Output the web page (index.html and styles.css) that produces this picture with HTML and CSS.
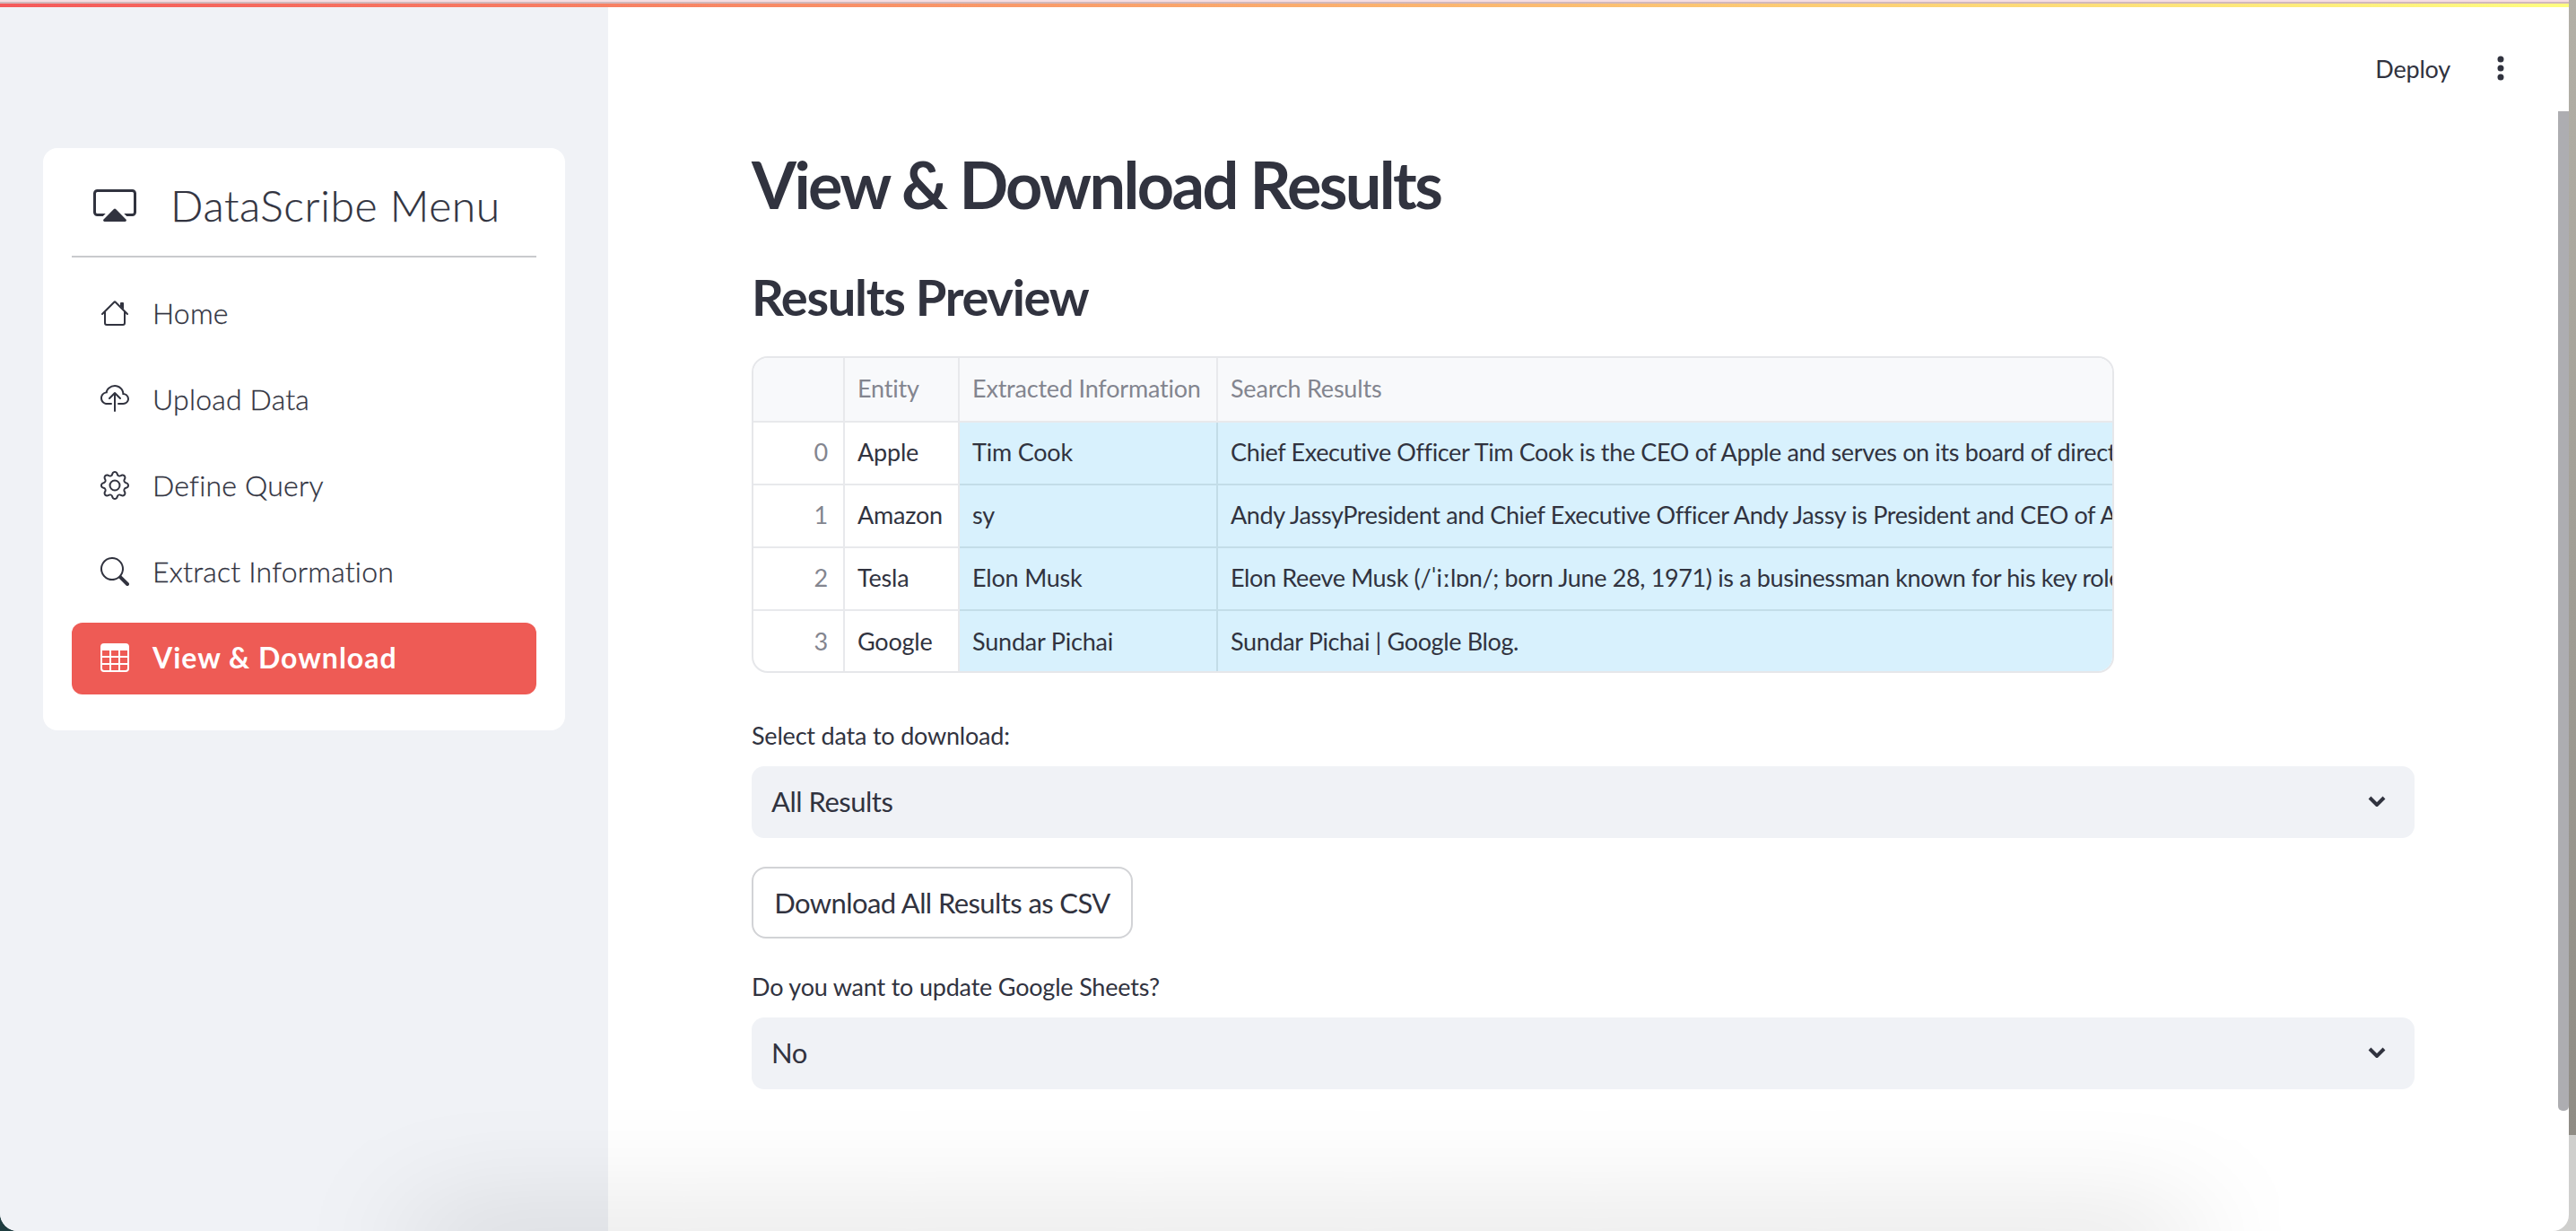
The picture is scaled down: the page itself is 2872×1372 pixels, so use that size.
FILE: index.html
```html
<!doctype html>
<html lang="en">
<head>
	<meta charset="utf-8">
	<title>View &amp; Download Results</title>
	<link rel="stylesheet" href="styles.css">
</head>
<body>

	<div class="window">
		<div class="stripe"></div>

		<div class="app">
			<aside class="sidebar">
				<nav class="menu-card">
					<div class="menu-title">
						<svg class="title-icon" viewBox="0 2 16 12" fill="currentColor"><path d="m7.646 9.354-3.792 3.792a.5.5 0 0 0 .353.854h7.586a.5.5 0 0 0 .354-.854L8.354 9.354a.5.5 0 0 0-.708 0z"/><path d="M11.414 11H14.5a.5.5 0 0 0 .5-.5v-7a.5.5 0 0 0-.5-.5h-13a.5.5 0 0 0-.5.5v7a.5.5 0 0 0 .5.5h3.086l-1 1H1.5A1.5 1.5 0 0 1 0 10.5v-7A1.5 1.5 0 0 1 1.5 2h13A1.5 1.5 0 0 1 16 3.5v7a1.5 1.5 0 0 1-1.5 1.5h-2.086l-1-1z"/></svg>
						<span>DataScribe Menu</span>
					</div>
					<hr class="menu-rule">
					<ul class="menu-list">
						<li class="menu-item">
							<svg class="item-icon" viewBox="0 0 16 16" fill="currentColor"><path d="M2 13.5V7h1v6.5a.5.5 0 0 0 .5.5h9a.5.5 0 0 0 .5-.5V7h1v6.5a1.5 1.5 0 0 1-1.5 1.5h-9A1.5 1.5 0 0 1 2 13.5zm11-11V6l-2-2V2.5a.5.5 0 0 1 .5-.5h1a.5.5 0 0 1 .5.5z"/><path d="M7.293 1.5a1 1 0 0 1 1.414 0l6.647 6.646a.5.5 0 0 1-.708.708L8 2.207 1.354 8.854a.5.5 0 1 1-.708-.708L7.293 1.5z"/></svg>
							Home
						</li>
						<li class="menu-item">
							<svg class="item-icon" viewBox="0 0 16 16" fill="currentColor"><path d="M4.406 1.342A5.53 5.53 0 0 1 8 0c2.69 0 4.923 2 5.166 4.579C14.758 4.804 16 6.137 16 7.773 16 9.569 14.502 11 12.687 11H10a.5.5 0 0 1 0-1h2.688C13.979 10 15 8.988 15 7.773c0-1.216-1.02-2.228-2.313-2.228h-.5v-.5C12.188 2.825 10.328 1 8 1a4.53 4.53 0 0 0-2.941 1.1c-.757.652-1.153 1.438-1.153 2.055v.448l-.445.049C2.064 4.805 1 5.952 1 7.318 1 8.785 2.23 10 3.781 10H6a.5.5 0 0 1 0 1H3.781C1.708 11 0 9.366 0 7.318c0-1.763 1.266-3.223 2.942-3.593.143-.863.698-1.723 1.464-2.383z"/><path d="M7.646 4.146a.5.5 0 0 1 .708 0l3 3a.5.5 0 0 1-.708.708L8.5 5.707V14.5a.5.5 0 0 1-1 0V5.707L5.354 7.854a.5.5 0 1 1-.708-.708l3-3z"/></svg>
							Upload Data
						</li>
						<li class="menu-item">
							<svg class="item-icon" viewBox="0 0 16 16" fill="currentColor"><path d="M8 4.754a3.246 3.246 0 1 0 0 6.492 3.246 3.246 0 0 0 0-6.492zM5.754 8a2.246 2.246 0 1 1 4.492 0 2.246 2.246 0 0 1-4.492 0z"/><path d="M9.796 1.343c-.527-1.79-3.065-1.79-3.592 0l-.094.319a.873.873 0 0 1-1.255.52l-.292-.16c-1.64-.892-3.433.902-2.54 2.541l.159.292a.873.873 0 0 1-.52 1.255l-.319.094c-1.79.527-1.79 3.065 0 3.592l.319.094a.873.873 0 0 1 .52 1.255l-.16.292c-.892 1.64.901 3.434 2.541 2.54l.292-.159a.873.873 0 0 1 1.255.52l.094.319c.527 1.79 3.065 1.79 3.592 0l.094-.319a.873.873 0 0 1 1.255-.52l.292.16c1.64.893 3.434-.902 2.54-2.541l-.159-.292a.873.873 0 0 1 .52-1.255l.319-.094c1.79-.527 1.79-3.065 0-3.592l-.319-.094a.873.873 0 0 1-.52-1.255l.16-.292c.893-1.64-.902-3.433-2.541-2.54l-.292.159a.873.873 0 0 1-1.255-.52l-.094-.319zm-2.633.283c.246-.835 1.428-.835 1.674 0l.094.319a1.873 1.873 0 0 0 2.693 1.115l.291-.16c.764-.415 1.6.42 1.184 1.185l-.159.292a1.873 1.873 0 0 0 1.116 2.692l.318.094c.835.246.835 1.428 0 1.674l-.319.094a1.873 1.873 0 0 0-1.115 2.693l.16.291c.415.764-.42 1.6-1.185 1.184l-.291-.159a1.873 1.873 0 0 0-2.693 1.116l-.094.318c-.246.835-1.428.835-1.674 0l-.094-.319a1.873 1.873 0 0 0-2.692-1.115l-.292.16c-.764.415-1.6-.42-1.184-1.185l.159-.291A1.873 1.873 0 0 0 1.945 8.93l-.319-.094c-.835-.246-.835-1.428 0-1.674l.319-.094A1.873 1.873 0 0 0 3.06 4.377l-.16-.292c-.415-.764.42-1.6 1.185-1.184l.292.159a1.873 1.873 0 0 0 2.692-1.115l.094-.319z"/></svg>
							Define Query
						</li>
						<li class="menu-item">
							<svg class="item-icon" viewBox="0 0 16 16" fill="currentColor"><path d="M11.742 10.344a6.5 6.5 0 1 0-1.397 1.398h-.001c.03.04.062.078.098.115l3.85 3.85a1 1 0 0 0 1.415-1.414l-3.85-3.85a1.007 1.007 0 0 0-.115-.1zM12 6.5a5.5 5.5 0 1 1-11 0 5.5 5.5 0 0 1 11 0z"/></svg>
							Extract Information
						</li>
						<li class="menu-item active">
							<svg class="item-icon" viewBox="0 0 16 16" fill="currentColor"><path d="M0 2a2 2 0 0 1 2-2h12a2 2 0 0 1 2 2v12a2 2 0 0 1-2 2H2a2 2 0 0 1-2-2V2zm15 2h-4v3h4V4zm0 4h-4v3h4V8zm0 4h-4v3h3a1 1 0 0 0 1-1v-2zm-5 3v-3H6v3h4zm-5 0v-3H1v2a1 1 0 0 0 1 1h3zm-4-4h4V8H1v3zm0-4h4V4H1v3zm5-3v3h4V4H6zm4 4H6v3h4V8z"/></svg>
							View &amp; Download
						</li>
					</ul>
				</nav>
			</aside>

			<main class="main">
				<header class="toolbar">
					<span class="deploy">Deploy</span>
					<svg class="kebab" viewBox="0 0 8 28" fill="currentColor"><circle cx="4" cy="4" r="3.5"/><circle cx="4" cy="14" r="3.5"/><circle cx="4" cy="24" r="3.5"/></svg>
				</header>

				<section class="content">
					<h1>View &amp; Download Results</h1>
					<h3>Results Preview</h3>

					<div class="table-wrap">
						<table class="results">
							<colgroup>
								<col class="col-index">
								<col class="col-entity">
								<col class="col-info">
								<col class="col-search">
							</colgroup>
							<thead>
								<tr><th></th><th>Entity</th><th>Extracted Information</th><th>Search Results</th></tr>
							</thead>
							<tbody>
								<tr>
									<th>0</th><td>Apple</td>
									<td class="hit">Tim Cook</td>
									<td class="hit long">Chief Executive Officer Tim Cook is the CEO of Apple and serves on its board of directors.</td>
								</tr>
								<tr>
									<th>1</th><td>Amazon</td>
									<td class="hit">sy</td>
									<td class="hit long">Andy JassyPresident and Chief Executive Officer Andy Jassy is President and CEO of Amazon.</td>
								</tr>
								<tr>
									<th>2</th><td>Tesla</td>
									<td class="hit">Elon Musk</td>
									<td class="hit long">Elon Reeve Musk (/ˈiːlɒn/; born June 28, 1971) is a businessman known for his key roles.</td>
								</tr>
								<tr>
									<th>3</th><td>Google</td>
									<td class="hit">Sundar Pichai</td>
									<td class="hit long">Sundar Pichai | Google Blog.</td>
								</tr>
							</tbody>
						</table>
					</div>

					<label class="field-label first">Select data to download:</label>
					<div class="select">
						<span>All Results</span>
						<svg class="chevron" viewBox="0 0 20 12"><path d="M2 2l8 8 8-8"/></svg>
					</div>

					<button class="download">Download All Results as CSV</button>

					<label class="field-label">Do you want to update Google Sheets?</label>
					<div class="select">
						<span>No</span>
						<svg class="chevron" viewBox="0 0 20 12"><path d="M2 2l8 8 8-8"/></svg>
					</div>
				</section>

				<div class="scroll-thumb"></div>
			</main>
		</div>

		<div class="dock-shadow"></div>
	</div>

	<div class="desktop"></div>

</body>
</html>
```

FILE: styles.css
```css
html, body {
	margin: 0;
	padding: 0;
	height: 100%;
}
body {
	display: flex;
	overflow: hidden;
	background: linear-gradient(90deg, #1f3d40 50%, #cfcfcd 50%);
	font-family: "Lato", sans-serif;
	color: #31333f;
}
.window {
	position: relative;
	flex: 1;
	display: flex;
	flex-direction: column;
	overflow: hidden;
	background: #fff;
	border-radius: 0 0 18px 20px;
}
.desktop {
	width: 8px;
	background: linear-gradient(#b3b0a7, #8f8c85 92.2%, #cfcfcd 92.2%);
}

/* top decoration */
.stripe {
	height: 8px;
	flex: none;
	background:
		linear-gradient(#f6dee2 0 2px, #d2b8bc 2px 4px, transparent 4px),
		linear-gradient(90deg, #f5595a, #fffd80);
}

.app {
	flex: 1;
	display: flex;
	min-height: 0;
}

/* sidebar */
.sidebar {
	width: 678px;
	flex: none;
	box-sizing: border-box;
	padding: 157px 48px 0;
	background: #f0f2f6;
}
.menu-card {
	box-sizing: border-box;
	height: 649px;
	padding: 29px 32px 0;
	background: #fff;
	border-radius: 16px;
}
.menu-title {
	box-sizing: border-box;
	display: flex;
	align-items: center;
	gap: 38px;
	height: 72px;
	padding: 0 0 3px 24px;
	font-size: 48px;
	font-weight: 300;
	letter-spacing: 0.6px;
	-webkit-text-stroke: 0.25px #31333f;
}
.title-icon {
	width: 48px;
	height: 36px;
	flex: none;
}
.menu-rule {
	height: 2px;
	margin: 19px 0 0;
	border: 0;
	background: #c9cacd;
}
.menu-list {
	list-style: none;
	margin: 23px 0 0;
	padding: 0;
	display: flex;
	flex-direction: column;
	gap: 16px;
}
.menu-item {
	box-sizing: border-box;
	display: flex;
	align-items: center;
	gap: 26px;
	height: 80px;
	padding: 0 0 3px 32px;
	border-radius: 12px;
	font-size: 32px;
	font-weight: 300;
	letter-spacing: 0.2px;
	-webkit-text-stroke: 0.3px #31333f;
}
.item-icon {
	width: 32px;
	height: 32px;
	flex: none;
}
.menu-item.active {
	background: #ee5b55;
	color: #fff;
	font-weight: 700;
	letter-spacing: 1px;
	-webkit-text-stroke: 0;
}

/* main column */
.main {
	position: relative;
	flex: 1;
	min-width: 0;
	overflow: hidden;
}
.toolbar {
	display: flex;
	justify-content: flex-end;
	align-items: center;
	gap: 52px;
	height: 60px;
	padding: 38px 72px 10px 0;
}
.deploy {
	font-size: 27px;
	letter-spacing: -0.2px;
}
.kebab {
	width: 8px;
	height: 28px;
}
.content {
	margin: 0 172px 0 160px;
}
h1 {
	margin: 44px 0 0;
	font-size: 72px;
	line-height: 90px;
	font-weight: 700;
	letter-spacing: -2.6px;
}
h3 {
	margin: 46px 0 0;
	font-size: 56px;
	line-height: 70px;
	font-weight: 700;
	letter-spacing: -1.3px;
}

/* results table */
.table-wrap {
	width: 1519px;
	height: 353px;
	margin-top: 31px;
	box-sizing: border-box;
	border: 2px solid #e6e7ea;
	border-radius: 18px;
	overflow: hidden;
}
.results {
	width: 100%;
	table-layout: fixed;
	border-collapse: collapse;
	font-size: 27px;
	letter-spacing: -0.2px;
}
.col-index { width: 101px; }
.col-entity { width: 128px; }
.col-info { width: 288px; }
.results th, .results td {
	height: 70px;
	box-sizing: border-box;
	padding: 0 14px 3px;
	border: 2px solid #e8e9ec;
	white-space: nowrap;
	overflow: hidden;
	font-weight: 400;
	text-align: left;
}
.results tr > :first-child { border-left: 0; }
.results tr > :last-child { border-right: 0; }
.results tr:first-child > * { border-top: 0; }
.results tbody tr:last-child > * { border-bottom: 0; }
.results thead th {
	height: 71px;
	background: #f8f9fb;
	color: #83858f;
}
.results tbody th {
	padding-right: 17px;
	text-align: right;
	color: #83858f;
}
.results td.hit {
	background: #d8f1fd;
	border-color: #c3dde8;
}
.results td.long {
	letter-spacing: -0.36px;
}

/* form bits */
.field-label {
	display: block;
	margin: 34px 0 0;
	font-size: 27px;
	line-height: 40px;
	letter-spacing: -0.2px;
}
.field-label.first {
	margin-top: 50px;
}
.select {
	display: flex;
	justify-content: space-between;
	align-items: center;
	box-sizing: border-box;
	height: 80px;
	margin-top: 14px;
	padding: 0 32px 2px 22px;
	background: #f0f2f6;
	border-radius: 14px;
	font-size: 31px;
	letter-spacing: -0.5px;
}
.chevron {
	width: 20px;
	height: 12px;
	fill: none;
	stroke: #31333f;
	stroke-width: 4;
}
.download {
	display: block;
	width: 425px;
	height: 80px;
	margin-top: 32px;
	padding: 0;
	background: #fff;
	border: 2px solid #d2d3d6;
	border-radius: 16px;
	font-family: inherit;
	font-size: 31px;
	letter-spacing: -0.6px;
	color: #31333f;
}

/* scrollbar and the shadow under the window */
.scroll-thumb {
	position: absolute;
	top: 116px;
	right: 0;
	width: 12px;
	height: 1114px;
	background: #adadb1;
	border-radius: 0 0 5px 5px;
}
.dock-shadow {
	position: absolute;
	top: 100%;
	left: 460px;
	right: 420px;
	height: 40px;
	box-shadow: 0 0 130px rgba(0, 0, 0, 0.25);
}
```
